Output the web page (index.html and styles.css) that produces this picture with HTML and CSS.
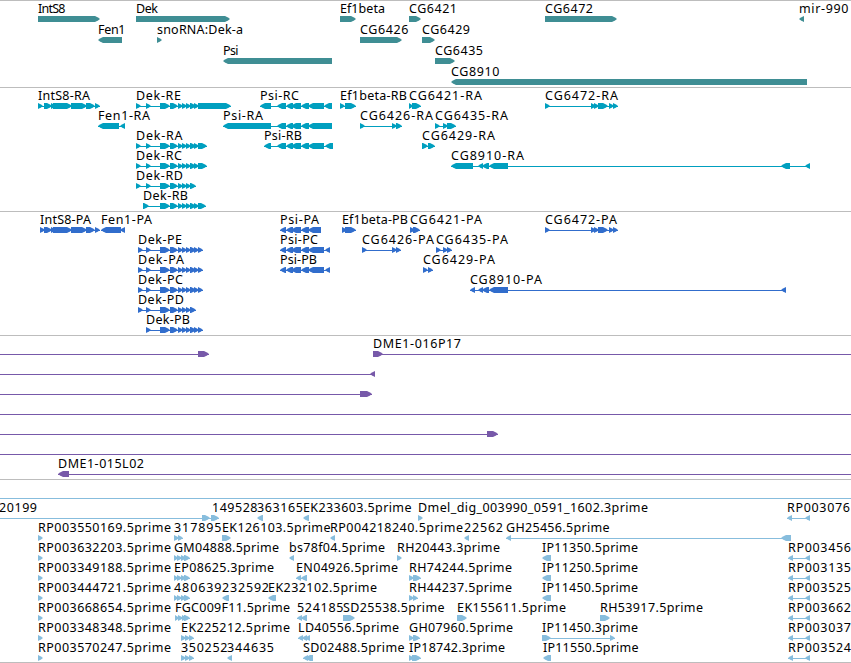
FILE: index.html
```
<!DOCTYPE html>
<html lang="en">
<head>
  <meta charset="UTF-8">
  <title>Genome tracks</title>
  <link rel="stylesheet" href="styles.css">
</head>
<body>

  <main class="tracks">
    <section class="track genes" id="genes"></section>
    <section class="track transcripts" id="transcripts"></section>
    <section class="track proteins" id="proteins"></section>
    <section class="track bacs" id="bacs"></section>
    <section class="track ests" id="ests"></section>
  </main>

  <script src="tracks.js"></script>

</body>
</html>
```
FILE: styles.css
```
body {
  margin: 0;
  background: #fff;
  overflow: hidden;
}
.tracks {
  display: flex;
  flex-direction: column;
  width: 851px;
  border-bottom: 1px solid #bdbdbd;
}
.track {
  box-sizing: border-box;
  border-top: 1px solid #bdbdbd;
  overflow: hidden;
}
.track svg {
  display: block;
  width: 100%;
  height: 100%;
}
.track text {
  font-family: "Noto Sans", "DejaVu Sans", sans-serif;
  font-size: 12.5px;
  fill: #000;
}
.intron {
  shape-rendering: crispEdges;
}
.genes {
  height: 87px;
  fill: #3f8e94;
}
.transcripts {
  height: 124px;
  fill: #009fbf;
}
.proteins {
  height: 124px;
  fill: #316dcc;
}
.bacs {
  height: 144px;
  fill: #7759a9;
}
.ests {
  height: 183px;
  fill: #87bddd;
}
```
FILE: tracks.js
```
const NS = "http://www.w3.org/2000/svg";

// exons shared by the Dek and Psi isoforms
const DEK = "160-170 170-178 178-183 182-187 186-191 190-196";
const PSI = "286-293 291-301 301-309";
const INTS = "44-52 51-56 53-72 71-87 86-95 95-100";

// row, label, label width, strand, exons, [line start, line end]
const genes = [
  [0, "IntS8", 27.5, "+", "38-100"],
  [0, "Dek", 22, "+", "136-230"],
  [0, "Ef1beta", 45, "+", "340-356"],
  [0, "CG6421", 48, "+", "409-421"],
  [0, "CG6472", 48, "+", "545-617"],
  [0, "mir-990", 49.5, "-", "799-804"],
  [1, "Fen1", 27.5, "-", "98-122"],
  [1, "snoRNA:Dek-a", 86, "+", "157-162"],
  [1, "CG6426", 48.5, "+", "360-402"],
  [1, "CG6429", 48, "+", "422-435"],
  [2, "Psi", 15.5, "-", "223-332"],
  [2, "CG6435", 48, "+", "435-455"],
  [3, "CG8910", 48.5, "-", "451-807"]
];

const transcripts = [
  [0, "IntS8-RA", 52, "+", "38-43 " + INTS],
  [0, "Dek-RE", 45, "+", "136-141 146-151 " + DEK + " 194-199 198-231"],
  [0, "Psi-RC", 39, "-", "260-271 277-286 " + PSI + " 308-324 324-332"],
  [0, "Ef1beta-RB", 67, "+", "340-345 345-356"],
  [0, "CG6421-RA", 73, "+", "409-413 412-421"],
  [0, "CG6472-RA", 73, "+", "545-550 591-596 594-599 598-608 609-614 613-618"],
  [1, "Fen1-RA", 52, "-", "98-119 120-125"],
  [1, "Psi-RA", 40, "-", "223-271 277-286 " + PSI + " 308-332"],
  [1, "CG6426-RA", 73, "+", "360-365 392-397 396-402"],
  [1, "CG6435-RA", 73, "+", "435-440 443-448 447-456"],
  [2, "Dek-RA", 46.5, "+", "136-141 146-151 " + DEK + " 194-199 198-207"],
  [2, "Psi-RB", 38, "-", "264-271 277-286 " + PSI + " 308-324 325-333"],
  [2, "CG6429-RA", 73, "+", "422-428 428-435"],
  [3, "Dek-RC", 46, "+", "136-141 146-151 " + DEK + " 194-199 198-207"],
  [3, "CG8910-RA", 73, "-", "451-473 478-483 482-489 489-508 781-790 805-810"],
  [4, "Dek-RD", 47, "+", "136-141 146-151 " + DEK],
  [5, "Dek-RB", 45, "+", "143-149 " + DEK + " 194-199 198-206"]
];

const proteins = [
  [0, "IntS8-PA", 51, "+", "40-45 " + INTS],
  [0, "Fen1-PA", 51, "-", "101-121 120-125"],
  [0, "Psi-PA", 39, "-", "280-286 " + PSI + " 308-321"],
  [0, "Ef1beta-PB", 66, "+", "342-347 345-356"],
  [0, "CG6421-PA", 72, "+", "410-415 413-420"],
  [0, "CG6472-PA", 72, "+", "545-550 591-596 594-599 598-608 609-614 613-618"],
  [1, "Dek-PE", 44, "+", "138-143 146-151 " + DEK + " 194-199 198-203"],
  [1, "Psi-PC", 38, "-", "280-286 " + PSI + " 308-324 325-330"],
  [1, "CG6426-PA", 72, "+", "362-367 392-397 396-401"],
  [1, "CG6435-PA", 72, "+", "436-441 443-448 447-452"],
  [2, "Dek-PA", 46, "+", "138-143 146-151 " + DEK + " 194-199 198-203"],
  [2, "Psi-PB", 37, "-", "280-286 " + PSI + " 308-324 325-330"],
  [2, "CG6429-PA", 72, "+", "423-428 428-433"],
  [3, "Dek-PC", 45, "+", "138-143 146-151 " + DEK + " 194-199 198-203"],
  [3, "CG8910-PA", 72, "-", "470-475 478-483 482-489 489-508 781-786"],
  [4, "Dek-PD", 46, "+", "138-143 146-151 " + DEK],
  [5, "Dek-PB", 44, "+", "146-151 " + DEK + " 194-199 198-203"]
];

const bacs = [
  [0, "", 0, "+", "198-209", 0, 209],
  [0, "DME1-016P17", 88, "+", "373-383", 373, 851],
  [1, "", 0, "-", "370-375", 0, 375],
  [2, "", 0, "+", "360-372", 0, 372],
  [3, "", 0, "+", "", 0, 851],
  [4, "", 0, "+", "487-498", 0, 498],
  [5, "", 0, "+", "", 0, 851],
  [6, "DME1-015L02", 86, "-", "58-69", 58, 851]
];

const ests = [
  [0, "", 0, "+", "", 0, 851],
  [1, "20199", 38, "+", "202-210 211-219", -1, 219],
  [1, "149528", 45.5, "+", "", 212, 212],
  [1, "363165", 46, "-", "257-263"],
  [1, "EK233603.5prime", 108.5, "-", "303-309"],
  [1, "Dmel_dig_003990_0591_1602.3prime", 230, "+", "418-423"],
  [1, "RP003076", 63, "-", "787-792 805-810"],
  [2, "RP003550169.5prime", 133, "+", "38-43"],
  [2, "317895", 47.5, "+", "174-179 178-183"],
  [2, "EK126103.5prime", 108.5, "+", "222-231"],
  [2, "RP004218240.5prime", 133, "-", "330-335"],
  [2, "22562", 39, "-", "464-469"],
  [2, "GH25456.5prime", 103.5, "-", "506-511 781-791"],
  [3, "RP003632203.5prime", 133, "+", "38-43"],
  [3, "GM04888.5prime", 105, "+", "174-178 177-182 181-186 184-190"],
  [3, "bs78f04.5prime", 96, "-", "289-294"],
  [3, "RH20443.3prime", 103, "+", "397-402"],
  [3, "IP11350.5prime", 96, "-", "542-551"],
  [3, "RP003456", 63, "-", "788-793 805-810"],
  [4, "RP003349188.5prime", 133, "+", "38-43"],
  [4, "EP08625.3prime", 100, "+", "174-178 177-182 181-186 184-190"],
  [4, "EN04926.5prime", 102, "-", "296-301 301-307"],
  [4, "RH74244.5prime", 103, "+", "409-414 413-421"],
  [4, "IP11250.5prime", 96, "-", "542-551"],
  [4, "RP003135", 63, "-", "788-793 805-810"],
  [5, "RP003444721.5prime", 133, "+", "38-43"],
  [5, "480639", 47.5, "+", "174-178 177-182 181-186 184-190"],
  [5, "232592", 47, "-", "222-229"],
  [5, "EK232102.5prime", 109, "-", "268-276"],
  [5, "RH44237.5prime", 103, "+", "409-414 413-418"],
  [5, "IP11450.5prime", 96, "-", "542-551"],
  [5, "RP003525", 63, "-", "788-793 805-810"],
  [6, "RP003668654.5prime", 133, "+", "38-43"],
  [6, "FGC009F11.5prime", 115, "+", "175-179 178-183 182-187 184-190"],
  [6, "524185", 46.5, "-", "297-302 301-307"],
  [6, "SD25538.5prime", 101.5, "+", "343-355"],
  [6, "EK155611.5prime", 109, "+", "457-467"],
  [6, "RH53917.5prime", 103, "+", "600-610"],
  [6, "RP003662", 63, "-", "788-793 805-810"],
  [7, "RP003348348.5prime", 133, "+", "38-43"],
  [7, "EK225212.5prime", 109, "+", "181-186 185-190 189-194"],
  [7, "LD40556.5prime", 101, "-", "298-303 302-307 305-310"],
  [7, "GH07960.5prime", 104, "+", "409-414 413-420"],
  [7, "IP11450.3prime", 96, "+", "542-551 610-615"],
  [7, "RP003037", 63, "-", "788-793 805-810"],
  [8, "RP003570247.5prime", 133, "+", "38-43"],
  [8, "350252", 46.5, "+", "181-186 185-190 189-194"],
  [8, "344635", 47, "-", "227-232"],
  [8, "SD02488.5prime", 101.5, "-", "303-308 305-313"],
  [8, "IP18742.3prime", 96, "+", "409-414 412-421"],
  [8, "IP11550.5prime", 95.5, "-", "543-551"],
  [8, "RP003524", 63, "-", "788-793 805-810"]
];

function add(parent, name, attrs) {
  const el = document.createElementNS(NS, name);
  for (const key in attrs) el.setAttribute(key, attrs[key]);
  parent.appendChild(el);
  return el;
}

// box with a slightly rounded 5px arrow head on the strand side
function exonPoints(a, b, y, strand) {
  const tip = Math.min(5, b - a);
  const base = strand === "+" ? a : b;
  const end = strand === "+" ? b : a;
  const dir = strand === "+" ? -1 : 1;
  const neck = end + dir * tip;
  const mid = end + dir * tip * 0.4;
  return `${base},${y} ${neck},${y} ${mid},${y + 1.4} ${end},${y + 3} ${mid},${y + 4.6} ${neck},${y + 6} ${base},${y + 6}`;
}

function drawTrack(id, features, pitch) {
  const svg = add(document.getElementById(id), "svg", {});
  for (const [row, label, width, strand, exonList, from, to] of features) {
    const y = 15 + row * pitch;
    const exons = exonList ? exonList.split(" ").map(e => e.split("-").map(Number)) : [];
    const start = from === undefined ? exons[0][0] : from;
    const end = to === undefined ? exons[exons.length - 1][1] : to;

    if (exons.length !== 1 || from !== undefined) {
      add(svg, "rect", { class: "intron", x: start, y: y + 3, width: end - start, height: 1 });
    }
    for (const [a, b] of exons) {
      add(svg, "polygon", { points: exonPoints(a, b, y, strand) });
    }
    if (label) {
      add(svg, "text", { x: start, y: y - 3, textLength: width }).textContent = label;
    }
  }
}

drawTrack("genes", genes, 21);
drawTrack("transcripts", transcripts, 20);
drawTrack("proteins", proteins, 20);
drawTrack("bacs", bacs, 20);
drawTrack("ests", ests, 20);
```
